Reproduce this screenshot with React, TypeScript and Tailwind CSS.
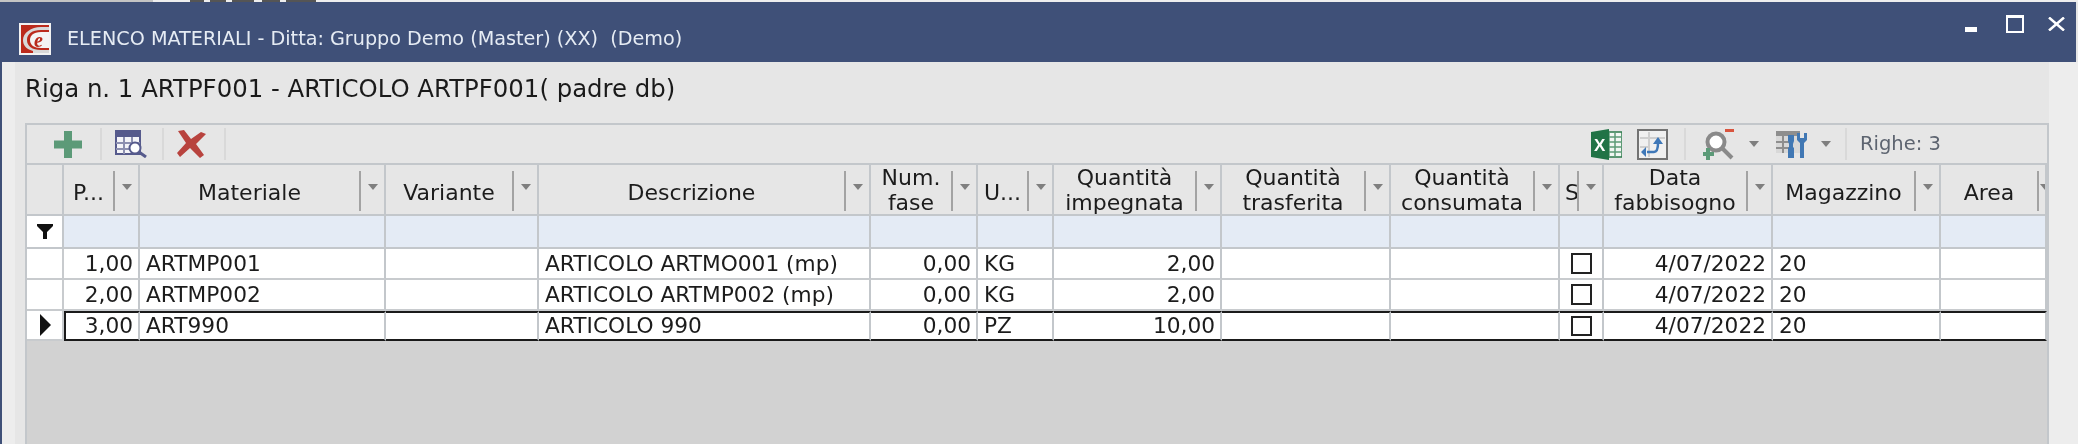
import { ReactNode } from 'react';

const gridCols =
  'grid grid-cols-[37px_76px_246px_153px_332px_107px_76px_168px_169px_169px_44px_169px_168px_106px]';

const headers: string[][] = [
  ['P...'],
  ['Materiale'],
  ['Variante'],
  ['Descrizione'],
  ['Num.', 'fase'],
  ['U...'],
  ['Quantità', 'impegnata'],
  ['Quantità', 'trasferita'],
  ['Quantità', 'consumata'],
  ['S'],
  ['Data', 'fabbisogno'],
  ['Magazzino'],
  ['Area'],
];

const rows = [
  { pos: '1,00', code: 'ARTMP001', desc: 'ARTICOLO ARTMO001 (mp)', um: 'KG', qty: '2,00' },
  { pos: '2,00', code: 'ARTMP002', desc: 'ARTICOLO ARTMP002 (mp)', um: 'KG', qty: '2,00' },
  { pos: '3,00', code: 'ART990', desc: 'ARTICOLO 990', um: 'PZ', qty: '10,00' },
];

function Logo() {
  return (
    <svg width="32" height="32" viewBox="0 0 32 32">
      <rect width="32" height="32" fill="#f2f2f2" />
      <rect x="2" y="2" width="28" height="28" fill="#bb2a1c" />
      <path d="M30 7 H22 C13 7 8 11 8 17 C8 23 13 27 22 27 H30 V30 H14 L14 28 C6 26 4 21 4 17 C4 10 12 4 22 4 H30 Z" fill="#d8d8d8" />
      <path d="M30 9 H22 C14 9 11 13 11 17 C11 22 15 25 22 25 H30 Z" fill="#f4f4f4" />
      <text x="15" y="24" fontSize="20" fontWeight="700" fontStyle="italic" fill="#b92a1c" fontFamily="'Liberation Serif', serif">e</text>
    </svg>
  );
}

function PlusIcon() {
  return (
    <svg width="28" height="27" viewBox="0 0 28 27">
      <path d="M10 0 H18 V9.5 H28 V17.5 H18 V27 H10 V17.5 H0 V9.5 H10 Z" fill="#5c9a78" />
    </svg>
  );
}

function TableSearchIcon() {
  return (
    <svg width="32" height="28" viewBox="0 0 32 28">
      <rect x="1" y="1" width="24" height="23" fill="#f4f4f8" stroke="#565a8c" strokeWidth="2" />
      <rect x="1" y="1" width="24" height="6" fill="#565a8c" />
      <path d="M9 7 V24 M17 7 V20 M1 13 H25 M1 19 H18" stroke="#8d90b0" strokeWidth="2" />
      <circle cx="20" cy="18" r="5.5" fill="#fff" stroke="#565a8c" strokeWidth="2" />
      <path d="M24 22 L31 27" stroke="#565a8c" strokeWidth="3" />
    </svg>
  );
}

function DeleteIcon() {
  return (
    <svg width="30" height="28" viewBox="0 0 30 28">
      <path d="M2 1 L8 0 L15 9 L25 2 L30 4 L20 14 L28 25 L24 28 L14 18 L4 27 L1 23 L10 13 Z" fill="#b8433e" />
    </svg>
  );
}

function ExcelIcon() {
  return (
    <svg width="31" height="31" viewBox="0 0 31 31">
      <rect x="12" y="3" width="19" height="25" fill="#f2f7f3" stroke="#2c7a4b" strokeWidth="1.5" />
      <path d="M18 3 V28 M24 3 V28 M12 8 H31 M12 13 H31 M12 18 H31 M12 23 H31" stroke="#5d9c77" strokeWidth="1.5" />
      <path d="M0 3 L18 0 V31 L0 28 Z" fill="#217346" />
      <text x="3" y="22" fontSize="17" fontWeight="700" fill="#fff" fontFamily="'Liberation Sans', sans-serif">X</text>
    </svg>
  );
}

function ExportIcon() {
  return (
    <svg width="31" height="31" viewBox="0 0 31 31">
      <rect x="1" y="1" width="29" height="29" fill="#f0f0f0" stroke="#737373" strokeWidth="2" />
      <path d="M3 9 H28 M12 3 V28 M3 18 H12" stroke="#cfcfcf" strokeWidth="2" />
      <path d="M10 23 H17 C20 23 21 20 21 14" fill="none" stroke="#3f78b8" strokeWidth="2.5" />
      <path d="M21 8 L26 15 H16 Z M9 18 L9 28 L4 23 Z" fill="#3f78b8" />
    </svg>
  );
}

function ZoomIcon() {
  return (
    <svg width="31" height="31" viewBox="0 0 31 31">
      <circle cx="13" cy="13" r="8.5" fill="#fff" stroke="#8a8a8a" strokeWidth="4" />
      <path d="M19 19 L29 29" stroke="#8a8a8a" strokeWidth="4" />
      <rect x="22" y="0" width="9" height="3" fill="#d9553f" />
      <path d="M3 19 H7 V23 H11 V27 H7 V31 H3 V27 H-1 V23 H3 Z" fill="#5c9a78" />
    </svg>
  );
}

function ToolsIcon() {
  return (
    <svg width="32" height="27" viewBox="0 0 32 27">
      <rect x="0" y="0" width="24" height="22" fill="#d8d8d8" />
      <rect x="0" y="0" width="24" height="5" fill="#8e8e8e" />
      <path d="M7 5 V22 M0 11 H14 M0 17 H14" stroke="#8e8e8e" strokeWidth="2" />
      <path d="M12 4 H18 V10 L17 13 V16 L18 17 V27 H12 V17 L13 16 V13 L12 10 Z" fill="#4178b4" />
      <path d="M21 2 L24 2 V7 H28 V2 L31 2 V9 L28 12 V27 H24 V12 L21 9 Z" fill="#4178b4" />
    </svg>
  );
}

function Caret() {
  return <div className="h-0 w-0 border-x-[5px] border-t-[6px] border-x-transparent border-t-[#7f7f7f]" />;
}

function Separator({ className }: { className: string }) {
  return <div className={`h-[32px] w-[2px] shrink-0 bg-[#d9d9d9] ${className}`} />;
}

function HeaderCell({ lines }: { lines: string[] }) {
  const clipped = lines[0] === 'S';
  const last = lines[0] === 'Area';
  const twoLines = lines.length > 1;
  return (
    <div className="flex h-full items-start overflow-hidden border-r-2 border-b-2 border-[#c3c7cb] bg-[#e6e6e6] text-[22px] leading-[25px] text-[#1c1c1c]">
      <div className={`flex h-full min-w-0 flex-1 flex-col justify-center ${twoLines ? 'pt-0' : 'pt-[5px]'} ${clipped ? 'items-start pl-[5px]' : 'items-center'}`}>
        {lines.map((line) => (
          <span key={line} className="whitespace-nowrap">{line}</span>
        ))}
      </div>
      <div className="mt-[6px] h-[40px] w-[2px] shrink-0 bg-[#a3a3a3]" />
      <div className={`flex h-[48px] shrink-0 items-center justify-center ${last ? 'w-[3px] overflow-hidden pl-[6px]' : 'w-[23px]'}`}>
        <div className="-mt-[4px]"><Caret /></div>
      </div>
    </div>
  );
}

function Cell({ children, align = 'left', active }: { children?: ReactNode; align?: 'left' | 'right' | 'center'; active: boolean }) {
  const alignClass =
    align === 'right' ? 'justify-end pr-[5px]' : align === 'center' ? 'justify-center' : 'justify-start pl-[6px]';
  const borderClass = active
    ? 'border-y-2 border-y-[#1a1a1a] border-r-[#c3c7cb]'
    : 'border-b-2 border-b-[#c8cbce] border-r-[#c3c7cb]';
  return (
    <div className={`flex min-h-0 items-center overflow-hidden whitespace-nowrap border-r-2 bg-white text-[21.7px] leading-[24px] text-[#1c1c1c] ${alignClass} ${borderClass}`}>
      {children}
    </div>
  );
}

export default function App() {
  return (
    <div className="h-[444px] w-[2078px] overflow-hidden bg-[#ececec] font-['DejaVu_Sans',sans-serif] blur-[0.5px]">
      {/* lembo della finestra sotto */}
      <div className="flex h-[2px] bg-[#eeeeee]">
        <div className="w-[153px] bg-[#c4c4c4]" />
        <div className="ml-[37px] w-[14px] bg-[#555555]" />
        <div className="ml-[6px] w-[16px] bg-[#555555]" />
        <div className="ml-[6px] w-[22px] bg-[#555555]" />
        <div className="ml-[8px] w-[18px] bg-[#555555]" />
        <div className="ml-[6px] w-[30px] bg-[#555555]" />
      </div>

      <div className="flex h-[60px] items-stretch border-r-2 border-[#e6e6e6] bg-[#3f5078]">
        <div className="flex flex-1 items-center pl-[19px] pt-[14px]">
          <Logo />
          <span className="ml-[16px] whitespace-pre text-[19.2px] text-[#e6ecf4]">
            ELENCO MATERIALI - Ditta: Gruppo Demo (Master) (XX)  (Demo)
          </span>
        </div>
        <div className="flex items-start pr-[11px] pt-[13px]">
          <div className="mt-[12px] h-[5px] w-[12px] bg-white" />
          <div className="ml-[29px] h-[18px] w-[18px] border-2 border-t-[3px] border-white" />
          <svg className="ml-[24px] mt-[2px]" width="17" height="14" viewBox="0 0 17 14">
            <path d="M1 0.5 L16 13.5 M16 0.5 L1 13.5" stroke="#fff" strokeWidth="2.5" />
          </svg>
        </div>
      </div>

      <div className="flex h-[382px] border-l-2 border-[#3f5078] bg-[#e6e6e6]">
        <div className="w-[13px] shrink-0 bg-[#ededed]" />
        <div className="flex w-[2034px] shrink-0 flex-col pl-[10px]">
          <div className="flex h-[61px] shrink-0 items-center pb-[6px] text-[24.4px] text-[#1a1a1a]">
            Riga n. 1 ARTPF001 - ARTICOLO ARTPF001( padre db)
          </div>

          <div className="flex min-h-0 flex-1 flex-col border-x-2 border-t-2 border-[#c3c7cb] bg-[#d2d2d2]">
            <div className="flex h-[40px] shrink-0 items-center border-b-2 border-[#c3c7cb] bg-[#e6e6e6]">
              <div className="ml-[27px]"><PlusIcon /></div>
              <Separator className="ml-[18px]" />
              <div className="ml-[13px]"><TableSearchIcon /></div>
              <Separator className="ml-[15px]" />
              <div className="ml-[12px]"><DeleteIcon /></div>
              <Separator className="ml-[18px]" />
              <div className="ml-[1365px]"><ExcelIcon /></div>
              <div className="ml-[15px]"><ExportIcon /></div>
              <Separator className="ml-[16px]" />
              <div className="ml-[17px]"><ZoomIcon /></div>
              <div className="ml-[15px]"><Caret /></div>
              <div className="ml-[17px]"><ToolsIcon /></div>
              <div className="ml-[13px]"><Caret /></div>
              <Separator className="ml-[14px]" />
              <span className="ml-[13px] text-[19.5px] text-[#5d6470]">Righe: 3</span>
            </div>

            <div className={`${gridCols} h-[51px] shrink-0`}>
              <div className="border-r-2 border-b-2 border-[#c3c7cb] bg-[#e6e6e6]" />
              {headers.map((lines, i) => (
                <HeaderCell key={i} lines={lines} />
              ))}
            </div>

            <div className={`${gridCols} h-[33px] shrink-0`}>
              <div className="flex items-center justify-center border-r-2 border-b-2 border-[#c3c7cb] bg-white">
                <svg width="16" height="15" viewBox="0 0 16 15">
                  <path d="M0 0 H16 V2 L10 8 V15 H6 V8 L0 2 Z" fill="#111" />
                </svg>
              </div>
              {headers.map((_, i) => (
                <div key={i} className="border-r-2 border-b-2 border-[#c3c7cb] bg-[#e4ebf5]" />
              ))}
            </div>

            {rows.map((row, index) => {
              const active = index === 2;
              return (
                <div key={row.code} className={`${gridCols} ${active ? 'h-[30px]' : 'h-[31px]'} shrink-0`}>
                  <div className="flex items-center justify-center border-r-2 border-b-2 border-[#c8cbce] bg-white pl-[2px]">
                    {active && <div className="h-0 w-0 border-y-[11px] border-l-[11px] border-y-transparent border-l-[#111111]" />}
                  </div>
                  <div className={active ? 'flex border-l-2 border-[#1a1a1a]' : 'flex'}>
                    <div className="grid flex-1"><Cell align="right" active={active}>{row.pos}</Cell></div>
                  </div>
                  <Cell active={active}>{row.code}</Cell>
                  <Cell active={active} />
                  <Cell active={active}>{row.desc}</Cell>
                  <Cell align="right" active={active}>0,00</Cell>
                  <Cell active={active}>{row.um}</Cell>
                  <Cell align="right" active={active}>{row.qty}</Cell>
                  <Cell active={active} />
                  <Cell active={active} />
                  <Cell align="center" active={active}>
                    <div className={`${active ? 'h-[20px]' : 'h-[21px]'} w-[21px] border-2 border-[#222222]`} />
                  </Cell>
                  <Cell align="right" active={active}>4/07/2022</Cell>
                  <Cell active={active}>20</Cell>
                  <Cell active={active} />
                </div>
              );
            })}
          </div>
        </div>
        <div className="flex-1 bg-[#ededed]" />
      </div>
    </div>
  );
}
